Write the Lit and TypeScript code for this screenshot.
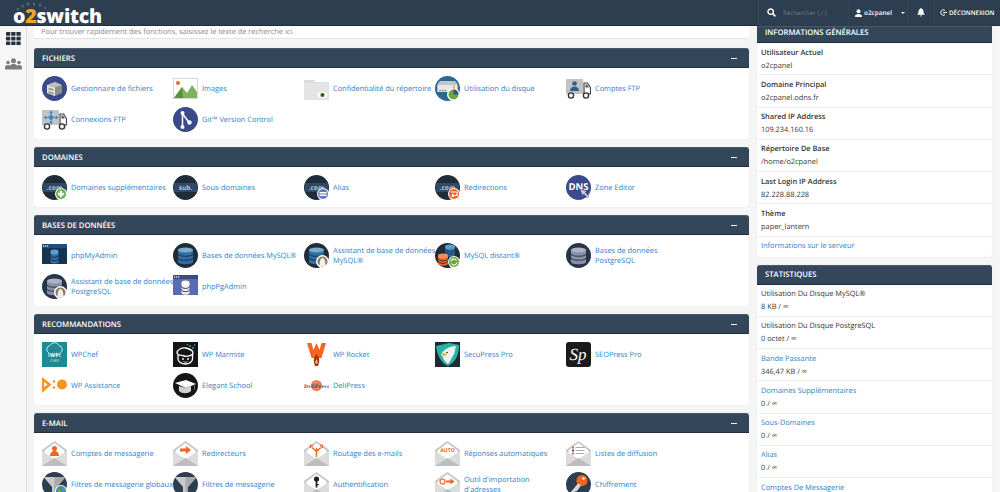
import {LitElement, html, css, svg} from 'lit';
import {customElement} from 'lit/decorators.js';

const DARK = '#1f2d3a';
const NAVY = '#3a4a8a';
const ORANGE = '#f26522';

// small shared pieces of the icons
const circle = (fill: string) => svg`<circle cx="12.5" cy="12.5" r="12.5" fill=${fill}/>`;

const cylinders = (x: number, y: number, w: number, body: string, top: string, gap = 5) => {
  const h = gap * 3;
  return svg`
    <path d="M${x} ${y}v${h}c0 3 ${w} 3 ${w} 0v-${h}z" fill=${body}/>
    <ellipse cx=${x + w / 2} cy=${y} rx=${w / 2} ry="2.4" fill=${top}/>
    <path d="M${x} ${y + gap}c0 3 ${w} 3 ${w} 0M${x} ${y + gap * 2}c0 3 ${w} 3 ${w} 0" fill="none" stroke=${DARK} stroke-width=".9"/>`;
};

const domain = (label: string, badge?: unknown) => svg`
  ${circle(DARK)}
  <rect x="1" y="8" width="23" height="9" rx="1" fill="#2f4a66"/>
  <text x="12.5" y="15" text-anchor="middle" font-size="6.6" font-weight="700" fill="#b9c4cf" font-family="Open Sans">${label}</text>
  ${badge}`;

const envelope = (inner: unknown) => svg`
  <path d="M0 9 12.5 0 25 9v16H0z" fill="#c6c6c6"/>
  <path d="M2.5 9.5 12.5 2 22.5 9.5v7l-10 5-10-5z" fill="#fff"/>
  ${inner}
  <path d="M0 10l12.5 8L25 10v15H0z" fill="#dcdcdc"/>
  <path d="M0 25l12.5-8L25 25z" fill="#bdbdbd"/>`;

const truck = (inner: unknown) => svg`
  <rect x="0" y="3" width="17" height="15" fill="#c2c2c2"/>
  ${inner}
  <path d="M18 7h3.5l3 4.5V18H18z" fill="#fff" stroke="#444" stroke-width="1.2"/>
  <path d="M19.5 8.5H21l2 3h-3.5z" fill="#555"/>
  <circle cx="5" cy="19.5" r="2.6" fill="#fff" stroke="#333" stroke-width="1.4"/>
  <circle cx="20" cy="19.5" r="2.6" fill="#fff" stroke="#333" stroke-width="1.4"/>`;

const wizard = svg`
  <circle cx="18.5" cy="18.5" r="6.5" fill="#fff"/>
  <circle cx="18.5" cy="18.5" r="5" fill="#8a7a62"/>
  <path d="M15.5 23c0-5 1-8 3-8s3 3 3 8z" fill="#f2efe8"/>`;

const funnel = svg`
  ${circle('#2c3e50')}
  <path d="M1.5 5h22L15 15v9h-5v-9z" fill="#c9c9c9"/>
  <path d="M12.5 5h11L15 15v9h-2.5z" fill="#a9a9a9"/>`;

const icons: Record<string, unknown> = {
  files: svg`${circle(NAVY)}
    <path d="M5 9l8-3 7 3v8l-7 3-8-3z" fill="#8d8d8d"/>
    <path d="M5 9l8 2.5V20l-8-3z" fill="#e4e4e4"/>
    <path d="M5 9l8-3 7 3-7 2.5z" fill="#bdbdbd"/>
    <path d="M6.5 11.5l5 1.5v2l-5-1.5zM6.5 15l5 1.5v2l-5-1.5z" fill="#9a9a9a"/>`,
  images: svg`<rect width="25" height="21" y="2" fill="#d9d9d9"/>
    <rect x="1" y="3" width="23" height="19" fill="#fff"/>
    <circle cx="5" cy="7" r="2" fill="#f26522"/>
    <path d="M1 22l8-11 5 6 5-8 5 7v6z" fill="#7fb35a"/>
    <path d="M1 22l8-11 1 11z" fill="#5a8f3c"/>`,
  privacy: svg`<path d="M0 4h10l1.5 2H25v18H0z" fill="#dadada"/>
    <path d="M0 6.5h25V24H0z" fill="#e4e4e4"/>
    <ellipse cx="18.5" cy="19" rx="5" ry="3.2" fill="#fff"/>
    <circle cx="18.5" cy="19" r="2.2" fill="#5c8a2e"/>
    <circle cx="18.5" cy="19" r="1" fill="#1f2d3a"/>`,
  disk: svg`${circle('#2b6793')}
    <path d="M2.5 8L5 5h15l2.5 3v7h-20z" fill="#c4c4c4"/>
    <rect x="2.5" y="9" width="20" height="7" fill="#e6e6e6"/>
    <rect x="4.5" y="14" width="1.2" height="1.2" fill="#555"/><rect x="7" y="14" width="1.2" height="1.2" fill="#555"/><rect x="9.5" y="14" width="1.2" height="1.2" fill="#555"/>
    <circle cx="18.5" cy="18.5" r="6.5" fill="#fff"/>
    <circle cx="18.5" cy="18.5" r="5" fill="#6aa83f"/>
    <path d="M18.5 13.5a5 5 0 0 1 5 5h-5z" fill="#3a4a8a"/>
    <path d="M18 9.5h1.5v4H18z" fill="#f2a33a"/>`,
  ftp: truck(svg`<circle cx="8.5" cy="7.5" r="2.3" fill="#2b5f92"/><path d="M4 15c0-3 2-4.5 4.5-4.5S13 12 13 15z" fill="#2b5f92"/>`),
  ftpconn: truck(svg`<g stroke="#3a86c8" stroke-width=".9" fill="#3a86c8"><path d="M3 10.5h12M9 6v9"/><circle cx="9" cy="10.5" r="2"/><circle cx="3.5" cy="10.5" r="1"/><circle cx="14.5" cy="10.5" r="1"/><circle cx="9" cy="5.5" r="1"/><circle cx="9" cy="15.5" r="1"/></g>`),
  git: svg`${circle(NAVY)}
    <path d="M9.5 5v15M9.5 6.5l6.500 9" stroke="#fff" stroke-width="1.5" fill="none"/>
    <circle cx="9.5" cy="6" r="2" fill="#fff"/><circle cx="9.5" cy="20" r="2" fill="#fff"/><circle cx="16.5" cy="15.5" r="2.2" fill="#fff"/>`,
  addon: domain('.com', svg`<circle cx="19" cy="19" r="6" fill="#fff"/><circle cx="19" cy="19" r="5" fill="#5cb04a"/><path d="M17.8 15.8h2.4v2h2v2.4h-2v2h-2.4v-2h-2v-2.4h2z" fill="#fff"/>`),
  sub: domain('sub.'),
  alias: domain('.com', svg`<circle cx="19" cy="19" r="6" fill="#fff"/><circle cx="19" cy="19" r="5" fill="#6a78b8"/><rect x="15.5" y="17" width="7" height="1.5" fill="#fff"/><rect x="15.5" y="19.5" width="7" height="1.5" fill="#fff"/>`),
  redirect: domain('.com', svg`<circle cx="19" cy="19" r="6" fill="#fff"/><circle cx="19" cy="19" r="5" fill="${ORANGE}"/><path d="M16 17h6v3.5h-5m1.5-1.7L17 20.500l1.500 1.700" fill="none" stroke="#fff" stroke-width="1.1"/>`),
  dns: svg`${circle(NAVY)}
    <text x="12.5" y="15" text-anchor="middle" font-size="9.5" font-weight="700" fill="#fff" font-family="Open Sans">DNS</text>
    <path d="M14 14l2.5 7 1.2-2 3.8 3.8 1.5-1.5-3.8-3.8 2-1.2z" fill="#c7cde6" stroke="#2c3566" stroke-width=".5"/>`,
  phpmyadmin: svg`<rect y="1" width="25" height="20" fill="#16344f"/>
    <rect y="1" width="25" height="4" fill="#1d4f7c"/>
    <rect x="1" y="2.4" width="1.2" height="1.2" fill="#fff"/><rect x="3" y="2.4" width="1.2" height="1.2" fill="#fff"/><rect x="5" y="2.4" width="1.2" height="1.2" fill="#fff"/>
    ${cylinders(8.5, 9, 8, '#2d6ea3', '#5d9ecf', 3.2)}`,
  mysql: svg`${circle(DARK)}${cylinders(5, 7, 15, '#2d6ea3', '#7fa9c9', 4)}`,
  mysqlwiz: svg`${circle(DARK)}${cylinders(5, 7, 15, '#2d6ea3', '#7fa9c9', 4)}${wizard}`,
  remote: svg`${circle(DARK)}
    ${cylinders(10, 4, 10, '#2d6ea3', '#5d9ecf', 2.5)}
    ${cylinders(3, 13, 10, ORANGE, '#f58f5a', 2.5)}
    <circle cx="19" cy="19" r="6" fill="#fff"/><circle cx="19" cy="19" r="5" fill="#6aa83f"/>
    <path d="M16 18.5a3 3 0 0 1 5.5-1M22 19.5a3 3 0 0 1-5.5 1" fill="none" stroke="#fff" stroke-width="1.1"/>`,
  pg: svg`${circle('#25364a')}${cylinders(5, 7, 15, '#8a8fa8', '#b0b3c4', 4)}`,
  pgwiz: svg`${circle('#25364a')}${cylinders(5, 7, 15, '#8a8fa8', '#b0b3c4', 4)}${wizard}`,
  pgadmin: svg`<rect y="1" width="25" height="20" fill="#5b6bb0"/>
    <rect y="1" width="25" height="4" fill="#3a4a8a"/>
    <rect x="1" y="2.4" width="1.2" height="1.2" fill="#fff"/><rect x="3" y="2.4" width="1.2" height="1.2" fill="#fff"/><rect x="5" y="2.4" width="1.2" height="1.2" fill="#fff"/>
    ${cylinders(8.5, 9, 8, '#f0f0f0', '#fff', 3.2)}`,
  chef: svg`<rect width="25" height="25" fill="#1f8a96"/>
    <path d="M7 15v-4a4 4 0 0 1 1-7.500 5 5 0 0 1 9 0A4 4 0 0 1 18 11v4" fill="none" stroke="#d9f0f2" stroke-width=".9"/>
    <text x="12.5" y="15" text-anchor="middle" font-size="5.5" font-weight="700" fill="#fff" font-family="Open Sans">WP</text>
    <text x="12.5" y="20" text-anchor="middle" font-size="3.8" fill="#d9f0f2" font-family="Open Sans">CHEF</text>`,
  marmite: svg`<rect width="25" height="25" fill="#161616"/>
    <path d="M4 11c0-3 5-6 9-5s7 3 7 5-5 4-9 3-7-1-7-3z" fill="none" stroke="#fff" stroke-width="1.3"/>
    <path d="M5 13v4c0 3 4 5 7.5 5s7-2 7-5v-5" fill="none" stroke="#fff" stroke-width="1.3"/>
    <circle cx="10" cy="17" r=".9" fill="#fff"/><circle cx="15" cy="17" r=".9" fill="#fff"/>
    <path d="M10.5 19.5c1 1 3 1 4 0" fill="none" stroke="#fff" stroke-width=".8"/>
    <g fill="#4aa3df"><circle cx="17" cy="4" r=".9"/><circle cx="20" cy="6" r=".9"/><circle cx="14.5" cy="2.5" r=".8"/><circle cx="21.5" cy="3" r=".8"/></g>`,
  rocket: svg`<path d="M3 1h4.500l2 7 3-7 3 7 2-7H22l-4.500 15h-10z" fill="${ORANGE}"/>
    <path d="M12.5 12c2 2.500 3.500 5 2.500 8.500l-1 3.500h-3l-1-3.500c-1-3.500.5-6 2.500-8.500z" fill="#a5341a"/>
    <path d="M12.5 17c1 1.500 1.500 3 1 4.500h-2c-.5-1.500 0-3 1-4.500z" fill="#f7c948"/>`,
  secupress: svg`<rect width="25" height="25" fill="#1e2b33"/>
    <path d="M1 4l13-3 10 2c0 9-3 17-11 21C6 21 2 13 1 4z" fill="#29b3a5"/>
    <path d="M6 13c2-5 8-9 15-9-1 3-1 7-3 10-2 2-2 5-5 8-3-2-5-5-5-7z" fill="#f2f2f2"/>
    <path d="M6 12l3-1 3 1-3 2.500z" fill="#f2b233"/><circle cx="12" cy="10.5" r=".8" fill="#222"/>`,
  seopress: svg`<rect width="25" height="25" rx="3" fill="#1a1a1a"/>
    <text x="12" y="18" text-anchor="middle" font-size="17" font-style="italic" fill="#fff" font-family="Liberation Serif">Sp</text>`,
  assistance: svg`<path d="M0 4l9.5 7.500L0 20z" fill="#f7941d"/><path d="M2 9l3.500 2.500L2 14z" fill="#fff"/>
    <circle cx="12" cy="8.5" r="1.2" fill="#f7941d"/><circle cx="12" cy="14.5" r="1.2" fill="#f7941d"/>
    <circle cx="20" cy="11.5" r="5" fill="#f7941d"/>`,
  school: svg`${circle('#151515')}
    <path d="M2 10l11-3 10 4-10 4z" fill="#fff"/>
    <path d="M6 13v5c3 3 9 3 12 0v-5l-5 2z" fill="#d0d0d0"/>
    <path d="M21.5 11v6" stroke="#777" stroke-width=".8"/>`,
  delipress: svg`<circle cx="12.5" cy="12.5" r="5.5" fill="#e9825c"/>
    <text x="12.5" y="14.5" text-anchor="middle" font-size="5.4" font-weight="700" fill="#6a3560" font-family="Liberation Serif" textLength="25">DeliPress</text>`,
  mailacc: envelope(svg`<circle cx="12.5" cy="7.5" r="2.5" fill="${ORANGE}"/><path d="M8 15c0-3.500 2-5 4.500-5s4.500 1.500 4.500 5z" fill="${ORANGE}"/>`),
  forward: envelope(svg`<path d="M7 7.5h6V5l5 4-5 4v-2.500H7z" fill="${ORANGE}"/>`),
  routing: envelope(svg`<path d="M12.5 16V7M12.5 10.5L8 6.500M12.5 10.5L17 6.500M9 4.500H6.500V7M16 4.500h2.500V7" fill="none" stroke="${ORANGE}" stroke-width="1.5"/>`),
  auto: envelope(svg`<text x="12.5" y="10.5" text-anchor="middle" font-size="5.2" font-weight="700" fill="${ORANGE}" font-family="Open Sans">AUTO</text>`),
  lists: envelope(svg`<rect x="6" y="5.5" width="2" height="2" fill="${ORANGE}"/><rect x="6" y="8.5" width="2" height="2" fill="#3a4a8a"/><rect x="6" y="11.5" width="2" height="2" fill="${ORANGE}"/><path d="M9.5 6.5h9M9.5 9.5h9M9.5 12.5h9" stroke="#aaa" stroke-width="1"/>`),
  globalfilter: svg`${funnel}<circle cx="19" cy="19" r="6" fill="#fff"/><circle cx="19" cy="19" r="5" fill="#3a86c8"/><path d="M15 17c2-1 3 0 4 1s0 3-1 4-3-3-3-5zM20 15c2 0 3 2 3 3l-2 1z" fill="#6aa83f"/>`,
  filter: funnel,
  auth: envelope(svg`<circle cx="12.5" cy="7" r="2.6" fill="#222"/><rect x="11.6" y="8" width="1.8" height="7.5" fill="#222"/><rect x="13" y="12" width="1.8" height="1.2" fill="#222"/>`),
  importer: envelope(svg`<circle cx="7.5" cy="9.5" r="2.5" fill="none" stroke="${ORANGE}" stroke-width="1.2"/><path d="M11 8.5h4.500v-2l4 3-4 3v-2H11z" fill="${ORANGE}"/>`),
  encrypt: svg`${circle('#2c3e50')}
    <circle cx="16" cy="8.5" r="5.5" fill="${ORANGE}"/>
    <path d="M12 11.500L4 21l2 2 2-1.500 1-2 2-.5 4-5.500z" fill="#d9d9d9"/>
    <circle cx="17.5" cy="6.5" r="1.3" fill="#fff"/>`,
};

type Item = {icon: string; label: string};
type Panel = {title: string; items: Item[]};

const panels: Panel[] = [
  {title: 'Fichiers', items: [
    {icon: 'files', label: 'Gestionnaire de fichiers'},
    {icon: 'images', label: 'Images'},
    {icon: 'privacy', label: 'Confidentialité du répertoire'},
    {icon: 'disk', label: 'Utilisation du disque'},
    {icon: 'ftp', label: 'Comptes FTP'},
    {icon: 'ftpconn', label: 'Connexions FTP'},
    {icon: 'git', label: 'Git™ Version Control'},
  ]},
  {title: 'Domaines', items: [
    {icon: 'addon', label: 'Domaines supplémentaires'},
    {icon: 'sub', label: 'Sous-domaines'},
    {icon: 'alias', label: 'Alias'},
    {icon: 'redirect', label: 'Redirections'},
    {icon: 'dns', label: 'Zone Editor'},
  ]},
  {title: 'Bases de données', items: [
    {icon: 'phpmyadmin', label: 'phpMyAdmin'},
    {icon: 'mysql', label: 'Bases de données MySQL®'},
    {icon: 'mysqlwiz', label: 'Assistant de base de données MySQL®'},
    {icon: 'remote', label: 'MySQL distant®'},
    {icon: 'pg', label: 'Bases de données PostgreSQL'},
    {icon: 'pgwiz', label: 'Assistant de base de données PostgreSQL'},
    {icon: 'pgadmin', label: 'phpPgAdmin'},
  ]},
  {title: 'Recommandations', items: [
    {icon: 'chef', label: 'WPChef'},
    {icon: 'marmite', label: 'WP Marmite'},
    {icon: 'rocket', label: 'WP Rocket'},
    {icon: 'secupress', label: 'SecuPress Pro'},
    {icon: 'seopress', label: 'SEOPress Pro'},
    {icon: 'assistance', label: 'WP Assistance'},
    {icon: 'school', label: 'Elegant School'},
    {icon: 'delipress', label: 'DeliPress'},
  ]},
  {title: 'E-mail', items: [
    {icon: 'mailacc', label: 'Comptes de messagerie'},
    {icon: 'forward', label: 'Redirecteurs'},
    {icon: 'routing', label: 'Routage des e-mails'},
    {icon: 'auto', label: 'Réponses automatiques'},
    {icon: 'lists', label: 'Listes de diffusion'},
    {icon: 'globalfilter', label: 'Filtres de messagerie globaux'},
    {icon: 'filter', label: 'Filtres de messagerie'},
    {icon: 'auth', label: 'Authentification'},
    {icon: 'importer', label: "Outil d'importation d'adresses"},
    {icon: 'encrypt', label: 'Chiffrement'},
  ]},
];

const general = [
  ['Utilisateur Actuel', 'o2cpanel'],
  ['Domaine Principal', 'o2cpanel.odns.fr'],
  ['Shared IP Address', '109.234.160.16'],
  ['Répertoire De Base', '/home/o2cpanel'],
  ['Last Login IP Address', '82.228.88.228'],
  ['Thème', 'paper_lantern'],
];

const stats: {label: string; value: string; link?: boolean}[] = [
  {label: 'Utilisation Du Disque MySQL®', value: '8 KB / ∞'},
  {label: 'Utilisation Du Disque PostgreSQL', value: '0 octet / ∞'},
  {label: 'Bande Passante', value: '346,47 KB / ∞', link: true},
  {label: 'Domaines Supplémentaires', value: '0 / ∞', link: true},
  {label: 'Sous-Domaines', value: '0 / ∞', link: true},
  {label: 'Alias', value: '0 / ∞', link: true},
  {label: 'Comptes De Messagerie', value: '0 / ∞', link: true},
];

@customElement('app-root')
export class AppRoot extends LitElement {
  static override styles = css`
    :host {
      display: block;
      height: 492px;
      overflow: hidden;
      background: #f5f5f5;
      font-family: 'Open Sans', 'Liberation Sans', sans-serif;
      font-size: 7.4px;
      color: #3a3a3a;
      text-rendering: geometricPrecision;
    }

    .top {
      display: flex;
      align-items: stretch;
      height: 26px;
      background: #2c3e4f;
      border-bottom: 1px solid #1f2d3a;
      box-sizing: border-box;
      color: #fff;
    }
    .logo {
      position: relative;
      margin-left: 13px;
      font-size: 19.5px;
      font-weight: 800;
      line-height: 31px;
      letter-spacing: -.2px;
      height: 26px;
    }
    .logo b { color: #f5a623; font-weight: 800; }
    .logo svg { position: absolute; left: 3px; top: 2px; }
    .spacer { flex: 1; }
    .seg {
      display: flex;
      align-items: center;
      border-left: 1px solid #344656;
      box-sizing: border-box;
    }
    .search { width: 90px; padding-left: 8px; gap: 7px; color: #6f7f8e; font-size: 6.2px; }
    .user { width: 59px; padding-left: 6px; gap: 2px; font-weight: 600; font-size: 6.4px; }
    .user .caret { margin-left: 7px; width: 0; height: 0; border: 2.2px solid transparent; border-top-color: #fff; border-bottom: 0; }
    .bell { width: 26px; justify-content: center; }
    .logout { width: 67px; padding-left: 6px; gap: 2px; font-weight: 600; font-size: 6.2px; }

    .body { display: flex; align-items: flex-start; }
    .side {
      flex: none;
      width: 27px;
      height: 466px;
      box-sizing: border-box;
      background: #f6f6f6;
      border-right: 1px solid #dcdcdc;
      display: flex;
      flex-direction: column;
      align-items: center;
      padding-top: 6px;
      gap: 13px;
    }
    .main { flex: none; width: 715px; margin-left: 7px; }
    .hint {
      height: 13px;
      line-height: 13px;
      margin-bottom: 9px;
      padding-left: 7px;
      box-sizing: border-box;
      background: #fff;
      border-bottom: 1px solid #e4e4e4;
      border-radius: 0 0 2px 2px;
      color: #8a8a8a;
    }
    .panel {
      margin-bottom: 8px;
      background: #fff;
      border-radius: 3px;
      box-shadow: 0 0 1px #cfcfcf;
    }
    .bar {
      display: flex;
      align-items: center;
      justify-content: space-between;
      height: 20px;
      padding: 1px 12px 0 8px;
      box-sizing: border-box;
      background: #34465a;
      border-top: 1px solid #4a5a6a;
      border-bottom: 1px solid #1f2d3a;
      border-radius: 3px 3px 0 0;
      color: #fff;
      font-size: 7.7px;
      font-weight: 600;
      text-transform: uppercase;
    }
    .minus { width: 6px; height: 1.5px; background: #fff; }
    .grid {
      display: grid;
      grid-template-columns: repeat(5, 131px);
      grid-auto-rows: 31px;
      padding: 5px 8px 4px;
    }
    .item { display: flex; align-items: center; gap: 4px; color: #2f82c8; line-height: 10px; }
    .item svg { flex: none; }
    .item span { flex: none; width: 104px; }

    .right { flex: none; width: 235px; margin-left: 8px; }
    .right .bar { height: 17px; border-radius: 0; padding: 0 0 3px 8px; }
    .right .panel.stat .bar { height: 20px; border-radius: 3px 3px 0 0; padding-bottom: 0; }
    .row {
      height: 32.25px;
      box-sizing: border-box;
      padding: 3.5px 4px 0;
      border-bottom: 1px solid #eee;
      line-height: 13px;
    }
    .row .name { font-weight: 600; color: #333; }
    .stat .row .name { font-weight: 400; }
    .row a, .foot { color: #2f82c8; }
    .foot { height: 20px; line-height: 19px; padding-left: 4px; }
  `;

  override render() {
    return html`
      <div class="top">
        <div class="logo">
          <svg width="36" height="10" viewBox="0 0 36 10" fill="#4d6475">
            <circle cx="2" cy="7" r="1.5"/><circle cx="7" cy="4" r="1.5"/><circle cx="12" cy="2" r="1.8"/>
            <circle cx="18" cy="2" r="1.5"/><circle cx="24" cy="3" r="1.5"/><circle cx="29" cy="6" r="1.2"/>
          </svg>
          o<b>2</b>switch
        </div>
        <div class="spacer"></div>
        <div class="seg search">
          <svg width="9" height="9" viewBox="0 0 9 9"><circle cx="3.7" cy="3.7" r="2.7" fill="none" stroke="#fff" stroke-width="1.4"/><path d="M5.7 5.7l2.600 2.600" stroke="#fff" stroke-width="1.7"/></svg>
          Rechercher ( / )
        </div>
        <div class="seg user">
          <svg width="7" height="8" viewBox="0 0 7 8" fill="#fff"><circle cx="3.5" cy="2.2" r="2"/><path d="M0 8V6.5L2.5 5h2L7 6.500V8z"/></svg>
          o2cpanel
          <span class="caret"></span>
        </div>
        <div class="seg bell">
          <svg width="8" height="9" viewBox="0 0 8 9" fill="#fff"><path d="M4 0c.5 0 .7.4.7.8C6 1.2 6.5 2.4 6.500 3.800c0 1.500.7 2.300 1.500 3H0c.8-.7 1.500-1.500 1.500-3C1.500 2.400 2 1.200 3.300.8 3.300.4 3.500 0 4 0z"/><path d="M3 7.500h2a1 1 0 0 1-2 0z"/></svg>
        </div>
        <div class="seg logout">
          <svg width="7" height="7" viewBox="0 0 7 7" fill="none" stroke="#fff" stroke-width="1"><path d="M5 1.300A2.700 2.700 0 1 0 5 5.700M3 3.500h4"/></svg>
          DÉCONNEXION
        </div>
      </div>
      <div class="body">
        <div class="side">
          <svg width="15" height="13" viewBox="0 0 15 13" fill="#26323e">
            ${[0, 4.7, 9.4].map(y => [0, 5.2, 10.4].map(x => svg`<rect x=${x} y=${y} width="4.3" height="3.7" rx=".4"/>`))}
          </svg>
          <svg width="19" height="12" viewBox="0 0 19 12" fill="#7d7d7d">
            <circle cx="4" cy="4.5" r="1.8"/><circle cx="15" cy="4.5" r="1.8"/><circle cx="9.5" cy="2.8" r="2.5"/>
            <path d="M1 11.500v-3L3 7h2l1 1v3.500zM13 11.500V8l1-1h2l2 1.500v3zM6 11.500v-4L8 6h3l2 1.500v4z"/>
          </svg>
        </div>
        <div class="main">
          <div class="hint">Pour trouver rapidement des fonctions, saisissez le texte de recherche ici.</div>
          ${panels.map(p => html`
            <section class="panel">
              <div class="bar">${p.title}<span class="minus"></span></div>
              <div class="grid">
                ${p.items.map(i => html`
                  <div class="item">
                    <svg width="25" height="25" viewBox="0 0 25 25">${icons[i.icon]}</svg>
                    <span>${i.label}</span>
                  </div>`)}
              </div>
            </section>`)}
        </div>
        <div class="right">
          <section class="panel">
            <div class="bar">Informations générales</div>
            ${general.map(([name, value]) => html`
              <div class="row"><div class="name">${name}</div><div>${value}</div></div>`)}
            <div class="foot">Informations sur le serveur</div>
          </section>
          <section class="panel stat">
            <div class="bar">Statistiques</div>
            ${stats.map(s => html`
              <div class="row">
                <div class="name">${s.link ? html`<a>${s.label}</a>` : s.label}</div>
                <div>${s.value}</div>
              </div>`)}
          </section>
        </div>
      </div>
    `;
  }
}

declare global {
  interface HTMLElementTagNameMap {
    'app-root': AppRoot;
  }
}
